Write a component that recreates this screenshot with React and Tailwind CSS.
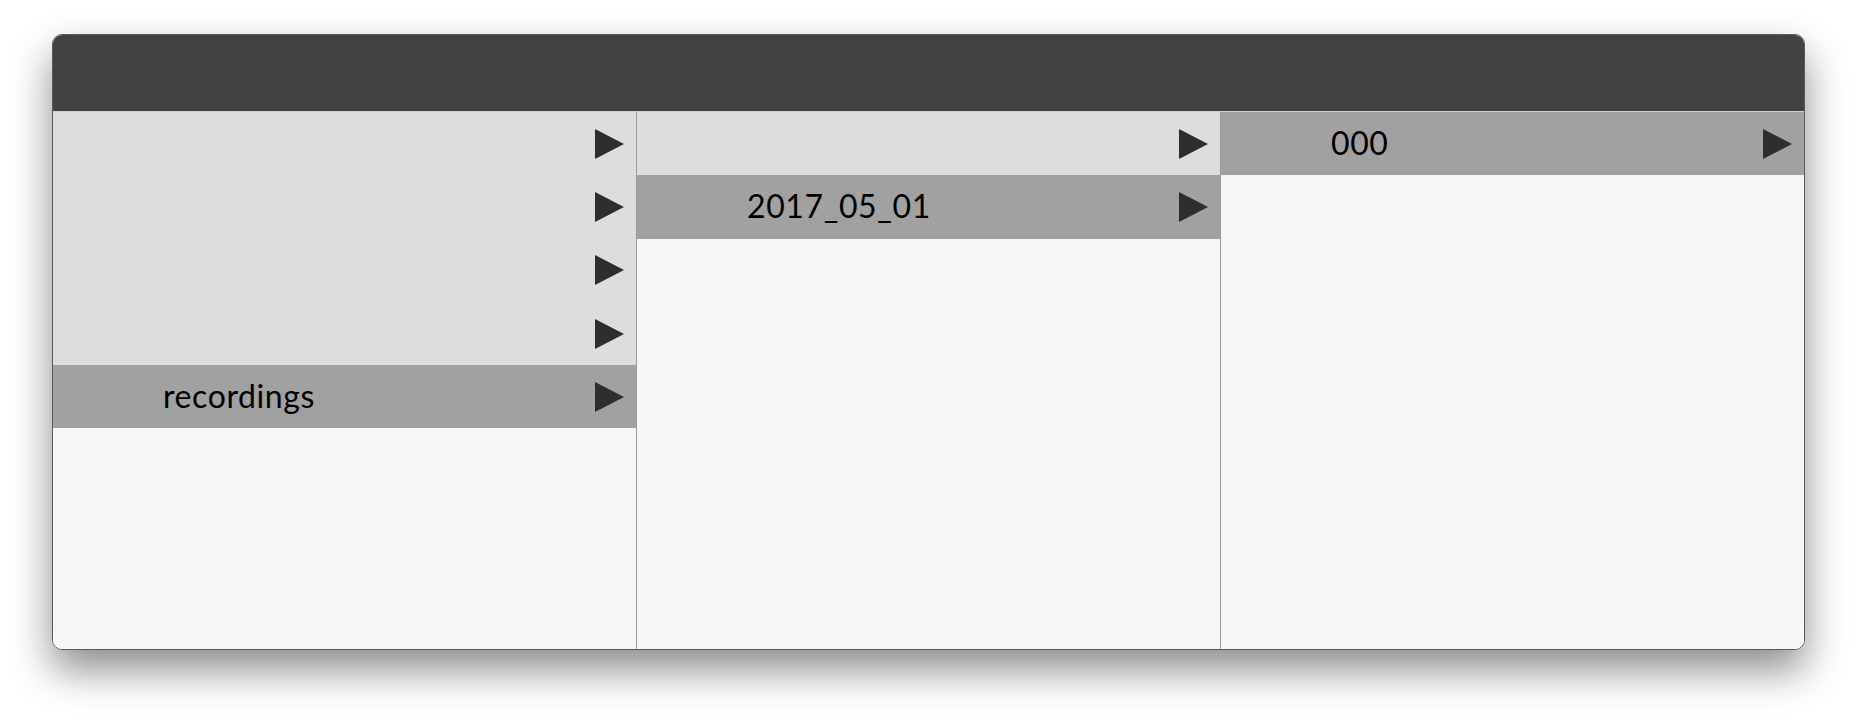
import React from "react";

const columns = [
  { rows: ["", "", "", "", "recordings"], selected: 4 },
  { rows: ["", "2017_05_01"], selected: 1 },
  { rows: ["000"], selected: 0 },
];

const Arrow = () => (
  <svg width="30" height="30" viewBox="0 0 30 30" className="shrink-0">
    <polygon points="0,0 29,15 0,30" fill="#2e2e2e" />
  </svg>
);

const Column = ({ rows, selected, first }) => (
  <div className={`flex-1 flex flex-col bg-[#f6f6f6] ${first ? "" : "border-l border-[#9c9c9c]"}`}>
    {rows.map((label, i) => (
      <div
        key={i}
        className={`h-[63.3px] flex items-center pl-[110px] pr-[11px] ${
          i === selected ? "bg-[#a1a1a1]" : "bg-[#dddddd]"
        }`}
      >
        <span className="flex-1 text-[32px] leading-none text-black font-['Lato','Liberation_Sans',sans-serif] tracking-[0.6px] -translate-y-[1px]">
          {label}
        </span>
        <Arrow />
      </div>
    ))}
  </div>
);

export default function App() {
  return (
    <div className="w-[1857px] h-[720px] bg-white pt-[34px] pl-[52px]">
      <div className="w-[1753px] h-[616px] flex flex-col rounded-[10px] overflow-hidden border border-[#5a5a5a] shadow-[0_20px_40px_rgba(0,0,0,0.45)]">
        <div className="h-[77px] bg-[#424242] border-b border-[#cfcfcf]" />
        <div className="flex-1 flex">
          {columns.map((c, i) => (
            <Column key={i} rows={c.rows} selected={c.selected} first={i === 0} />
          ))}
        </div>
      </div>
    </div>
  );
}
